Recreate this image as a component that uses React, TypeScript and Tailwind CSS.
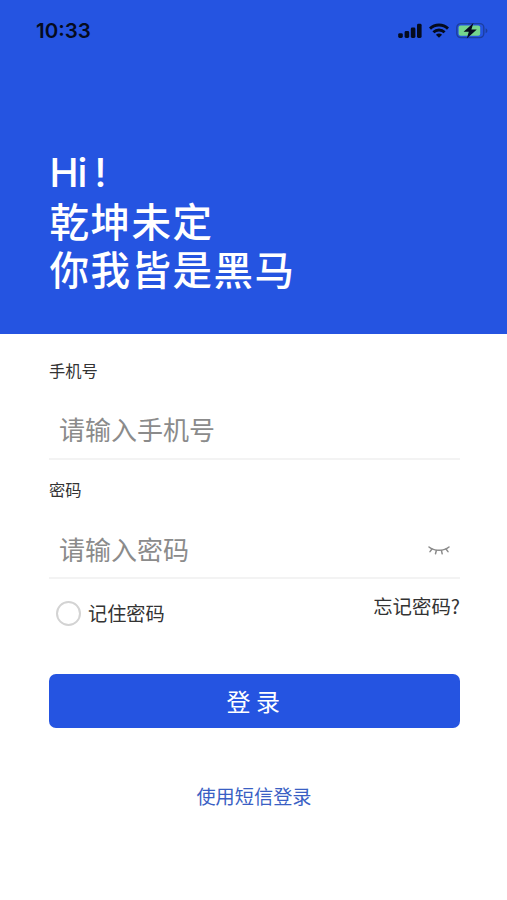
import React from 'react';

interface FieldProps {
  label: string;
  placeholder: string;
  type: string;
  children?: React.ReactNode;
}

const SignalIcon = () => (
  <svg width="24" height="16" viewBox="0 0 24 16" fill="#050b1d">
    <rect x="0.2" y="10.2" width="4.6" height="4.8" rx="1.4" />
    <rect x="6.6" y="8" width="4.6" height="7" rx="1.4" />
    <rect x="12.8" y="4.6" width="4.6" height="10.4" rx="1.4" />
    <rect x="19" y="0.8" width="4.6" height="14.2" rx="1.4" />
  </svg>
);

const WifiIcon = () => (
  <svg width="20" height="16" viewBox="0 0 20 16" fill="none" stroke="#050b1d" strokeWidth="2.9">
    <path d="M1 5.6 C6 0.7 14 0.7 19 5.6" />
    <path d="M4.4 9.3 C7.6 6.3 12.4 6.3 15.6 9.3" />
    <path d="M10 14.8 L6.9 11.7 C8.6 10.1 11.4 10.1 13.1 11.7 Z" fill="#050b1d" stroke="none" />
  </svg>
);

const BatteryIcon = () => (
  <svg width="33" height="18" viewBox="0 0 33 18">
    <rect x="0.8" y="1.6" width="27" height="14" rx="4" fill="none" stroke="#1c3f9f" strokeWidth="1.4" />
    <rect x="2.6" y="3.5" width="21.6" height="10.2" rx="2" fill="#74d58c" />
    <path d="M29.6 6.2 C32 7.2 32 10.2 29.6 11.2 Z" fill="#1c3f9f" />
    <path d="M17.4 1 L7.6 9.8 H12.8 L10.8 16.4 L20.8 7.6 H15.4 Z" fill="#050b1d" />
  </svg>
);

// 閉じた目のアイコン
const EyeClosedIcon = () => (
  <svg width="22" height="12" viewBox="0 0 22 12" fill="none" stroke="#8b8b8b" strokeWidth="1.5" strokeLinecap="round">
    <path d="M1 2 C6 6.4 16 6.4 21 2" />
    <path d="M4 4 L2 6.6" />
    <path d="M8.4 5.4 L7.5 8.8" />
    <path d="M13.4 5.4 L14.2 8.8" />
    <path d="M18 4 L20 6.6" />
  </svg>
);

const Field: React.FC<FieldProps> = ({ label, placeholder, type, children }) => (
  <label className="mb-[17.5px] block">
    <span className="block h-6 text-[16.3px] leading-6 text-[#333]">{label}</span>
    <div className="mt-[18px] flex h-[60px] items-center border-b-2 border-[#f3f3f3] pl-2.5 pr-2.5">
      <input
        type={type}
        placeholder={placeholder}
        className="h-10 min-w-0 flex-1 bg-transparent text-[26px] outline-none placeholder:text-[#8b8b8b]"
      />
      {children}
    </div>
  </label>
);

export default function App() {
  return (
    <div className="h-[900px] w-full overflow-hidden bg-white font-['Noto_Sans_CJK_SC',sans-serif] text-[#333]">
      <header className="h-[333.5px] bg-[#2554e1]">
        <div className="flex h-[61px] items-center justify-between pl-9 pr-[18px]">
          <span className="pt-0.5 font-['Inter',sans-serif] text-[20.5px] font-semibold text-[#050b1d]">10:33</span>
          <div className="flex items-center gap-[7px]">
            <SignalIcon />
            <WifiIcon />
            <BatteryIcon />
          </div>
        </div>
        <h1 className="pl-[49.5px] pt-[87px] text-[39.5px] font-medium leading-[48px] tracking-[1.5px] text-white">
          <div className="pt-px font-['Inter','Noto_Sans_CJK_SC',sans-serif] text-[39px] leading-[47px] tracking-[-1px]">
            Hi<span className="ml-2">!</span>
          </div>
          <div>乾坤未定</div>
          <div>你我皆是黑马</div>
        </h1>
      </header>

      <main className="pl-[49px] pr-[47px] pt-6">
        <Field label="手机号" placeholder="请输入手机号" type="tel" />
        <Field label="密码" placeholder="请输入密码" type="password">
          <span className="pt-1.5">
            <EyeClosedIcon />
          </span>
        </Field>

        <div className="-mt-[17.5px] flex h-[68px] items-start justify-between pt-[15px]">
          <label className="flex items-center gap-[7px] pl-[7px] pt-[5px] text-[19.2px] leading-7">
            <span className="size-[25px] rounded-full border-2 border-[#d3d3d3]" />
            记住密码
          </label>
          <a className="text-[19.4px] leading-6">忘记密码?</a>
        </div>

        <button className="mt-[26.5px] block h-[54px] w-[410.5px] rounded-[7px] bg-[#2554e1] pr-0.5 text-[24px] text-white">登 录</button>
        <a className="mt-[54px] block pr-px text-center text-[19.2px] leading-7 text-[#3a5fc4]">使用短信登录</a>
      </main>
    </div>
  );
}
